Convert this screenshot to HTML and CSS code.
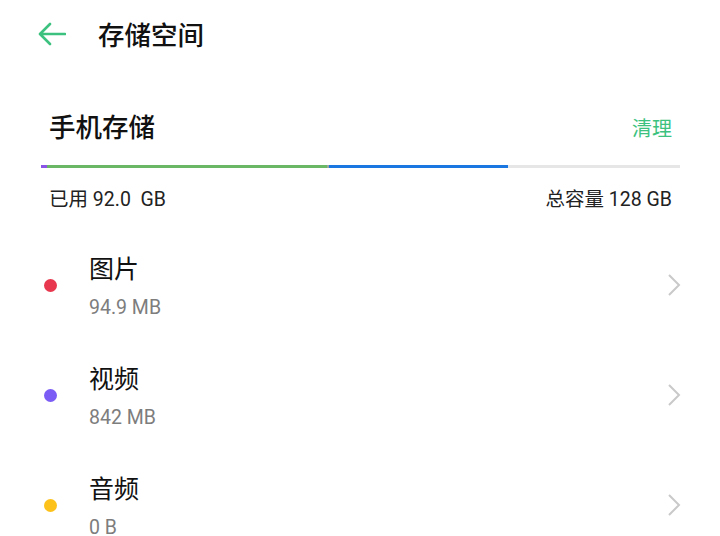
FILE: index.html
```html
<!DOCTYPE html>
<html>
	<head>
		<meta charset="utf-8">
		<title>存储空间</title>
		<link rel="stylesheet" href="styles.css">
	</head>
	<body>
		<div class="topbar">
			<svg class="back" width="28" height="24" viewBox="0 0 28 24">
				<path d="M27 12H3M12 2L2 12L12 22" fill="none" stroke="#3cc27e" stroke-width="2.6" stroke-linecap="round" stroke-linejoin="round"/>
			</svg>
			<span class="title">存储空间</span>
		</div>
		<div class="storage">
			<div class="head">
				<span class="name">手机存储</span>
				<span class="clean">清理</span>
			</div>
			<div class="bar">
				<div class="seg purple" style="width:6px"></div>
				<div class="seg green" style="width:280px"></div>
				<div class="seg grey" style="width:2px"></div>
				<div class="seg blue" style="width:179px"></div>
			</div>
			<div class="usage">
				<span>已用 92.0&nbsp; GB</span>
				<span>总容量 128 GB</span>
			</div>
		</div>
		<div class="list">
			<div class="item">
				<span class="dot red"></span>
				<div class="info">
					<div class="label">图片</div>
					<div class="size">94.9 MB</div>
				</div>
				<svg class="arrow" width="14" height="24" viewBox="0 0 14 24"><path d="M2 2L12 12L2 22" fill="none" stroke="#c9c9c9" stroke-width="2"/></svg>
			</div>
			<div class="item">
				<span class="dot violet"></span>
				<div class="info">
					<div class="label">视频</div>
					<div class="size">842 MB</div>
				</div>
				<svg class="arrow" width="14" height="24" viewBox="0 0 14 24"><path d="M2 2L12 12L2 22" fill="none" stroke="#c9c9c9" stroke-width="2"/></svg>
			</div>
			<div class="item">
				<span class="dot yellow"></span>
				<div class="info">
					<div class="label">音频</div>
					<div class="size">0 B</div>
				</div>
				<svg class="arrow" width="14" height="24" viewBox="0 0 14 24"><path d="M2 2L12 12L2 22" fill="none" stroke="#c9c9c9" stroke-width="2"/></svg>
			</div>
		</div>
	</body>
</html>
```
FILE: styles.css
```css
body{
	margin:0;
	background-color:#fff;
	font-family:Roboto,"Noto Sans CJK SC",sans-serif;
	color:#111;
	overflow:hidden;
}
.topbar{
	height:68px;
	display:flex;
	align-items:center;
	padding-left:38px;
}
.back{
	display:block;
}
.title{
	margin-left:32px;
	font-size:26.5px;
	font-weight:500;
	padding-bottom:2px;
}
.storage{
	padding:30px 40px 0 41px;
}
.head{
	height:56px;
	display:flex;
	align-items:center;
	justify-content:space-between;
	padding:0 8px;
}
.name{
	font-size:26.5px;
	font-weight:500;
	padding-bottom:2px;
}
.clean{
	font-size:20px;
	color:#3cc27e;
	padding-top:2px;
}
.bar{
	margin-top:11px;
	height:3px;
	background-color:#e6e6e6;
	display:flex;
}
.seg{
	height:3px;
}
.purple{background-color:#8a55e6;}
.green{background-color:#6ab866;}
.grey{background-color:#9aa5a0;}
.blue{background-color:#1a76e0;}
.usage{
	margin-top:14px;
	height:30px;
	display:flex;
	align-items:center;
	justify-content:space-between;
	padding:0 8px;
	font-size:19.5px;
	color:#222;
}
.list{
	margin-top:18px;
	padding:0 40px 0 44px;
}
.item{
	height:110px;
	display:flex;
	align-items:center;
}
.dot{
	width:13px;
	height:13px;
	border-radius:50%;
}
.red{background-color:#e8384f;}
.violet{background-color:#7b5cf5;}
.yellow{background-color:#fcc21b;}
.info{
	flex:1;
	margin-left:32px;
	padding-top:4px;
}
.label{
	font-size:25px;
	line-height:30px;
	color:#111;
}
.size{
	margin-top:11px;
	font-size:19.5px;
	line-height:24px;
	color:#7d7d7d;
}
.arrow{
	display:block;
	margin-right:-1px;
}
```
